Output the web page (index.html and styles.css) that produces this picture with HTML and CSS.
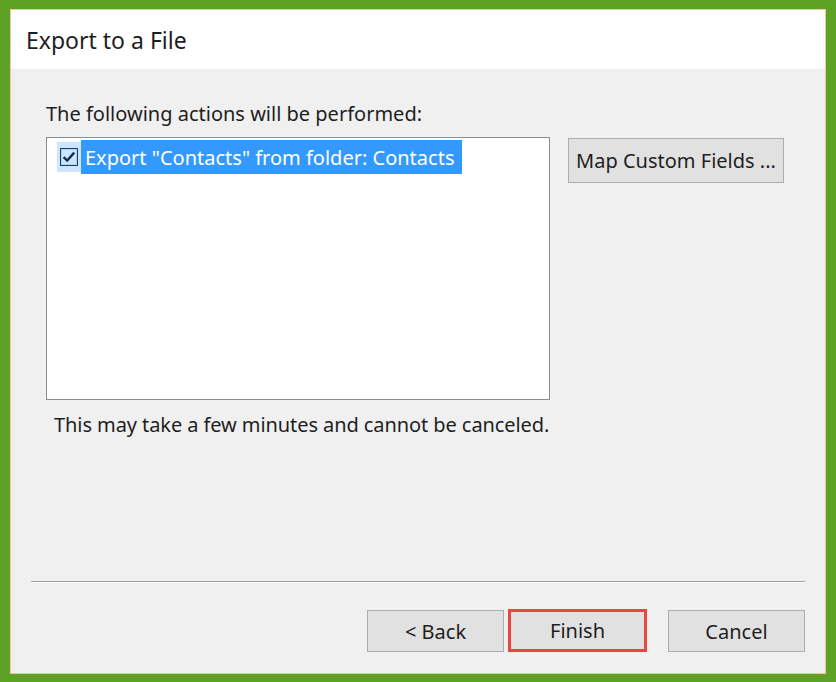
FILE: index.html
```html
<!DOCTYPE html>
<html lang="en">
<head>
<meta charset="utf-8">
<title>Export to a File</title>
<link rel="stylesheet" href="styles.css">
</head>
<body>
<div class="frame">
  <div class="window">
    <header class="head">
      <h1 class="title">Export to a File</h1>
    </header>
    <main class="content">
      <p class="label">The following actions will be performed:</p>
      <div class="actions-row">
        <div class="listbox">
          <div class="item">
            <span class="check-cell">
              <svg class="check" width="18" height="18" viewBox="0 0 18 18">
                <rect x="0.5" y="0.5" width="17" height="17" fill="#cde6ff" stroke="#1f3f66"/>
                <rect x="1.5" y="1.5" width="15" height="15" fill="none" stroke="#a9d1fb"/>
                <path d="M3.6 9.2 L7.2 12.6 L14.2 4.6" fill="none" stroke="#1b2d47" stroke-width="2.4"/>
              </svg>
            </span>
            <span class="item-text">Export "Contacts" from folder: Contacts</span>
          </div>
        </div>
        <button class="btn btn-map" type="button">Map Custom Fields ...</button>
      </div>
      <p class="note">This may take a few minutes and cannot be canceled.</p>
    </main>
    <footer class="foot">
      <hr class="sep">
      <div class="buttons">
        <button class="btn btn-nav" type="button">&lt; Back</button>
        <button class="btn btn-nav btn-finish" type="button">Finish</button>
        <button class="btn btn-nav btn-cancel" type="button">Cancel</button>
      </div>
    </footer>
  </div>
</div>
</body>
</html>
```
FILE: styles.css
```css
html, body {
  margin: 0;
  padding: 0;
}

body {
  font-family: "Noto Sans", "Open Sans", "DejaVu Sans", sans-serif;
  color: #1e1e1e;
}

.frame {
  width: 836px;
  height: 682px;
  box-sizing: border-box;
  background: #5da225;
  padding: 9px 10px 8px 10px;
  display: flex;
}

.window {
  flex: 1;
  border: 1px solid #f3c79c;
  background: #f0f0f0;
  display: flex;
  flex-direction: column;
}

.head {
  background: #ffffff;
  height: 59px;
  display: flex;
  align-items: center;
  padding-left: 15px;
  border-bottom: 1px solid #ececec;
}

.title {
  margin: 0;
  font-size: 23px;
  font-weight: normal;
  color: #1e1e1e;
}

.content {
  padding: 0 0 0 35px;
  flex: 1;
}

.label {
  margin: 30px 0 9px 0;
  font-size: 20px;
  line-height: 28px;
}

.actions-row {
  display: flex;
  align-items: flex-start;
  gap: 18px;
}

.listbox {
  width: 504px;
  height: 263px;
  box-sizing: border-box;
  border: 1px solid #8a8d92;
  background: #ffffff;
  padding: 2px 0 0 10px;
}

.item {
  display: flex;
  align-items: center;
  height: 34px;
}

.check-cell {
  width: 24px;
  height: 30px;
  background: #cde6ff;
  display: flex;
  align-items: center;
  justify-content: center;
}

.check {
  display: block;
}

.item-text {
  background: #3399ff;
  color: #ffffff;
  font-size: 20px;
  height: 34px;
  line-height: 34px;
  padding: 1px 8px 0 4px;
  box-sizing: border-box;
}

.btn {
  font-family: inherit;
  font-size: 20px;
  color: #1e1e1e;
  background: #e1e1e1;
  border: 1px solid #adadad;
  border-radius: 0;
  box-sizing: border-box;
  padding: 0;
  margin: 0;
}

.btn-map {
  width: 216px;
  height: 45px;
  margin-top: 1px;
}

.note {
  margin: 11px 0 0 8px;
  font-size: 20px;
  line-height: 28px;
  letter-spacing: -0.08px;
}

.foot {
  padding: 0 20px 21px 20px;
}

.sep {
  margin: 0;
  border: 0;
  height: 1px;
  background: #a0a0a0;
  border-bottom: 1px solid #ffffff;
}

.buttons {
  display: flex;
  justify-content: flex-end;
  margin-top: 27px;
}

.btn-nav {
  width: 137px;
  height: 42px;
}

.btn-finish {
  width: 139px;
  height: 43px;
  margin: -1px 0 0 4px;
  border: 3px solid #e8473f;
}

.btn-cancel {
  margin-left: 21px;
}
```
